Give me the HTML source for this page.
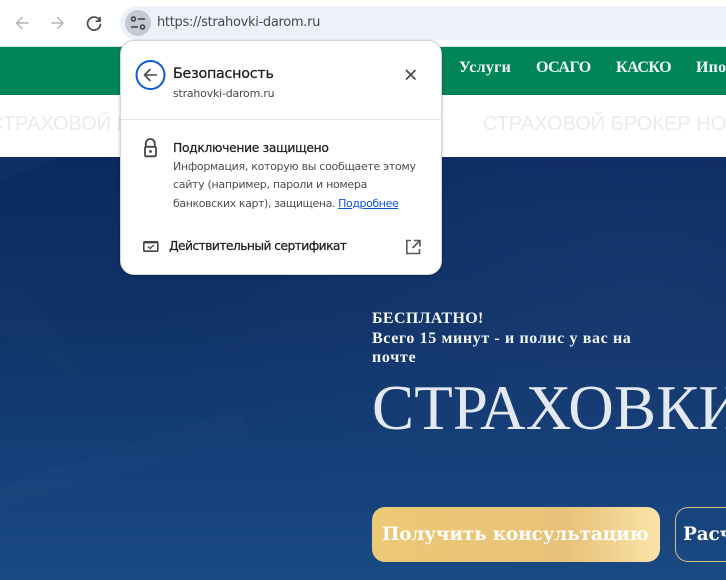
<!DOCTYPE html>
<html lang="ru"><head><meta charset="utf-8"><title>Безопасность</title>
<style>
html,body{margin:0;padding:0;width:726px;height:580px;overflow:hidden;background:#fff}
*{box-sizing:border-box}
#page{position:relative;width:726px;height:580px;overflow:hidden;contain:paint}
.a{position:absolute;white-space:nowrap}
.ui{font-family:"DejaVu Sans","Liberation Sans",sans-serif}
.se{font-family:"Liberation Serif",serif}
.nv{top:58px;font-size:16px;line-height:20px;font-weight:bold;color:#f3f8f5}
.mq{top:112px;font:20px/24px "Liberation Sans",sans-serif;color:#ebebeb;overflow:hidden}
#hero{position:absolute;left:0;top:157px;width:726px;height:423px;overflow:hidden;background:radial-gradient(500px 260px at 640px 130px,rgba(40,70,130,.3),rgba(40,70,130,0)),linear-gradient(180deg,#0b2a60 0%,#0f3265 35%,#15407a 75%,#1b4a82 100%)}
#pop{position:absolute;left:120px;top:40px;width:322px;height:235px;background:#fff;border:1px solid #d4d6da;border-radius:14px;box-shadow:0 1px 3px rgba(0,0,0,.25)}
svg{position:absolute;overflow:visible}
</style></head><body><div id="page">
<div class="a" style="left:120px;top:6px;width:606px;height:34px;background:#edf2fa;border-radius:17px 0 0 17px"></div>
<svg style="left:0;top:0" width="120" height="40" fill="none" stroke-linecap="round" stroke-linejoin="round">
<path d="M28 23H17M22 17.500L16.500 23 22 28.500" stroke="#b4b6b9" stroke-width="1.500"/>
<path d="M52 23H63M57.500 17.500L63 23 57.500 28.500" stroke="#b4b6b9" stroke-width="1.500"/>
<path d="M99.500 20A6.500 6.500 0 1 0 100.500 24.500M100 17.500V21.200H96.300" stroke="#46484b" stroke-width="1.700"/>
</svg>
<div class="a" style="left:125px;top:10px;width:26px;height:26px;border-radius:50%;background:#c5c9d2"></div>
<svg style="left:125px;top:10px" width="26" height="26" fill="none" stroke="#3f4146" stroke-width="1.500">
<circle cx="8.500" cy="9" r="2"/><path d="M13 9H20M6 17H13"/><circle cx="17.500" cy="17" r="2"/>
</svg>
<div class="a ui" style="left:157px;top:14px;font-size:13px;line-height:18px;color:#44474c;letter-spacing:-.31px">https://strahovki-darom.ru</div>

<div class="a" style="left:0;top:46px;width:726px;height:1px;background:#dcdcdc"></div>
<div class="a" style="left:0;top:47px;width:726px;height:48px;background:#008558"></div>
<div class="a se nv" style="left:459px;letter-spacing:.25px">Услуги</div>
<div class="a se nv" style="left:536px;letter-spacing:-.5px">ОСАГО</div>
<div class="a se nv" style="left:616px;letter-spacing:-.5px">КАСКО</div>
<div class="a se nv" style="left:696px;width:30px;overflow:hidden;letter-spacing:.2px">Ипотека</div>

<div class="a mq" style="left:0;width:120px"><span style="margin-left:-11px">СТРАХОВОЙ БРОКЕР</span></div>
<div class="a mq" style="left:483px;width:243px">СТРАХОВОЙ БРОКЕР НОМЕР</div>

<div id="hero">
<svg style="left:0;top:0" width="726" height="423">
<path d="M0 0H60L0 25Z" fill="#fff" opacity=".02"/>
<path d="M0 90L90 230 0 175Z" fill="#fff" opacity=".012"/>
<path d="M0 330L240 250 250 280 0 350Z" fill="#fff" opacity=".012"/>
</svg>
<div class="a se" style="left:372px;top:152px;font-size:16px;line-height:19.500px;color:#f2f5f9;font-weight:bold"><span style="letter-spacing:.35px">БЕСПЛАТНО!</span><br><span style="letter-spacing:.62px">Всего 15 минут - и полис у вас на</span><br><span style="letter-spacing:.7px">почте</span></div>
<div class="a se" style="left:372px;top:215px;width:354px;overflow:hidden;font-size:63px;line-height:72px;color:#e4e9f1;letter-spacing:.2px">СТРАХОВКИ</div>
<div class="a" style="left:372px;top:350px;width:288px;height:55px;border-radius:13px;background:linear-gradient(90deg,#edc875 0%,#e8c279 68%,#fbe3a8 100%);color:#fff;font-family:'DejaVu Serif',serif;font-size:18.400px;line-height:56px;font-weight:bold;padding-left:10px;letter-spacing:-.1px;overflow:hidden">Получить консультацию</div>
<div class="a" style="left:675px;top:350px;width:51px;height:55px;border-radius:13px 0 0 13px;border:1px solid #d6bd84;border-right:0;color:#fff;font-family:'DejaVu Serif',serif;font-size:18.400px;line-height:54px;font-weight:bold;padding-left:7px;letter-spacing:-.1px;overflow:hidden">Расчитать</div>
</div>

<div id="pop">
<svg style="left:-1px;top:-1px" width="322" height="235" fill="none">
<circle cx="30.500" cy="35" r="14" stroke="#0f5bd0" stroke-width="2"/>
<path d="M36.500 35H25M30 29.500L24.500 35 30 40.500" stroke="#4a4c50" stroke-width="1.600" stroke-linecap="round" stroke-linejoin="round"/>
<path d="M286 30L295.500 39.500M295.500 30L286 39.500" stroke="#45474b" stroke-width="1.600"/>
<path d="M25.800 106.500V103.500a4.500 4.500 0 0 1 9 0V106.500" stroke="#444649" stroke-width="1.800"/>
<rect x="25" y="106.800" width="11" height="9.500" rx="1.200" stroke="#444649" stroke-width="1.800"/>
<circle cx="30.500" cy="111.500" r="1.400" fill="#444649"/>
<rect x="23.800" y="201.800" width="14" height="9.400" rx="1" stroke="#444649" stroke-width="1.600"/>
<path d="M24 202.300H38" stroke="#444649" stroke-width="2.200"/>
<path d="M27.800 206.500L30 208.500 34 205" stroke="#444649" stroke-width="1.300"/>
<path d="M291 200.500H286.800V213.500H299.500V209" stroke="#55575b" stroke-width="1.600"/>
<path d="M292.500 208L299.500 201M294 200.500H300V206.500" stroke="#55575b" stroke-width="1.600"/>
</svg>
<div class="a ui" style="left:52px;top:23px;font-size:14.300px;line-height:20px;color:#1f1f1f;letter-spacing:-.25px;-webkit-text-stroke:.25px #1f1f1f">Безопасность</div>
<div class="a ui" style="left:52px;top:45px;font-size:11px;line-height:15px;color:#44474c;letter-spacing:-.22px">strahovki-darom.ru</div>
<div class="a" style="left:0;top:78px;width:320px;height:1px;background:#dfe3ea"></div>
<div class="a ui" style="left:52px;top:98px;font-size:12.300px;line-height:18px;color:#1f1f1f;letter-spacing:-.3px;-webkit-text-stroke:.25px #1f1f1f">Подключение защищено</div>
<div class="a ui" style="left:52px;top:117px;font-size:11px;line-height:18.300px;color:#4b4d52;letter-spacing:-.3px">Информация, которую вы сообщаете этому<br>сайту (например, пароли и номера<br><span style="letter-spacing:-.41px">банковских карт), защищена. <span style="color:#0b57d0;text-decoration:underline">Подробнее</span></span></div>
<div class="a ui" style="left:48px;top:196px;font-size:12.300px;line-height:18px;color:#1f1f1f;letter-spacing:-.57px;-webkit-text-stroke:.25px #1f1f1f">Действительный сертификат</div>
</div>
</div></body></html>
